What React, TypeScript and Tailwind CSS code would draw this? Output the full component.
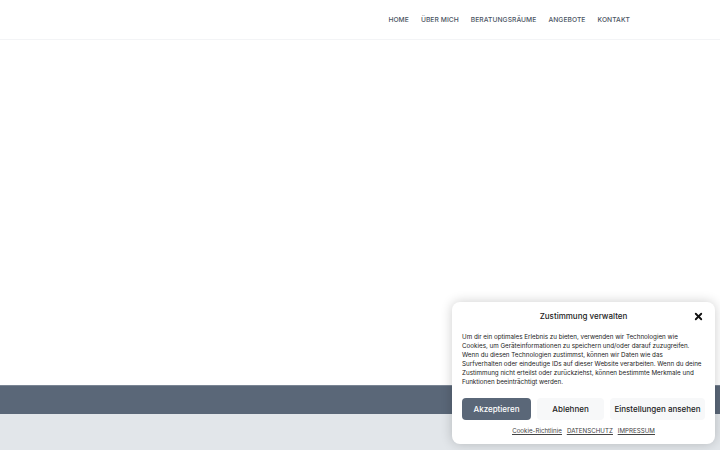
import { X } from 'lucide-react';

const navItems = ['Home', 'Über mich', 'Beratungsräume', 'Angebote', 'Kontakt'];

function Header() {
  return (
    <header className="flex h-10 items-center justify-end border-b border-gray-100 bg-white pr-[90px]">
      <nav className="flex items-center gap-[12px] pt-[1px]">
        {navItems.map((item) => (
          <a key={item} className="text-[6.7px] font-medium uppercase tracking-[0.01em] text-[#4b5563]">
            {item}
          </a>
        ))}
      </nav>
    </header>
  );
}

function CookieBanner() {
  return (
    <div className="absolute left-[452px] top-[302px] w-[263px] rounded-lg bg-white px-[10px] pb-[9px] pt-[8px] shadow-[0_0_12px_rgba(0,0,0,0.2)]">
      <div className="relative flex h-[12px] items-center justify-center">
        <p className="text-[8px] font-medium text-[#222]">Zustimmung verwalten</p>
        <X className="absolute right-[1px] top-[1px] h-[11px] w-[11px] text-[#111]" strokeWidth={4} />
      </div>
      <p className="mt-[11px] whitespace-nowrap text-[6.25px] leading-[9px] text-[#222]">
        Um dir ein optimales Erlebnis zu bieten, verwenden wir Technologien wie
        <br />
        Cookies, um Geräteinformationen zu speichern und/oder darauf zuzugreifen.
        <br />
        Wenn du diesen Technologien zustimmst, können wir Daten wie das
        <br />
        Surfverhalten oder eindeutige IDs auf dieser Website verarbeiten. Wenn du deine
        <br />
        Zustimmung nicht erteilst oder zurückziehst, können bestimmte Merkmale und
        <br />
        Funktionen beeinträchtigt werden.
      </p>
      <div className="mt-[11px] flex gap-[6px]">
        <button className="h-[22px] w-[69px] rounded-[4px] bg-[#5a6778] text-[8px] font-medium text-white">
          Akzeptieren
        </button>
        <button className="h-[22px] w-[67px] rounded-[4px] bg-[#f7f8f9] text-[8px] font-medium text-[#222]">
          Ablehnen
        </button>
        <button className="h-[22px] flex-1 rounded-[4px] bg-[#f7f8f9] text-[8px] font-medium text-[#222]">
          Einstellungen ansehen
        </button>
      </div>
      <div className="mt-[6px] flex justify-center gap-[5px] text-[6.2px] text-[#444] underline">
        <a>Cookie-Richtlinie</a>
        <a>DATENSCHUTZ</a>
        <a>IMPRESSUM</a>
      </div>
    </div>
  );
}

export default function App() {
  return (
    <div
      className="relative h-[450px] w-[720px] overflow-hidden bg-white"
      style={{ fontFamily: 'Inter, "Noto Sans", sans-serif' }}
    >
      <Header />
      <main className="h-[345px] bg-white" />
      <div className="h-[29px] border-t border-[#7a8594] bg-[#5a6778]" />
      <div className="h-[40px] bg-[#e2e6ea]" />
      <CookieBanner />
    </div>
  );
}
